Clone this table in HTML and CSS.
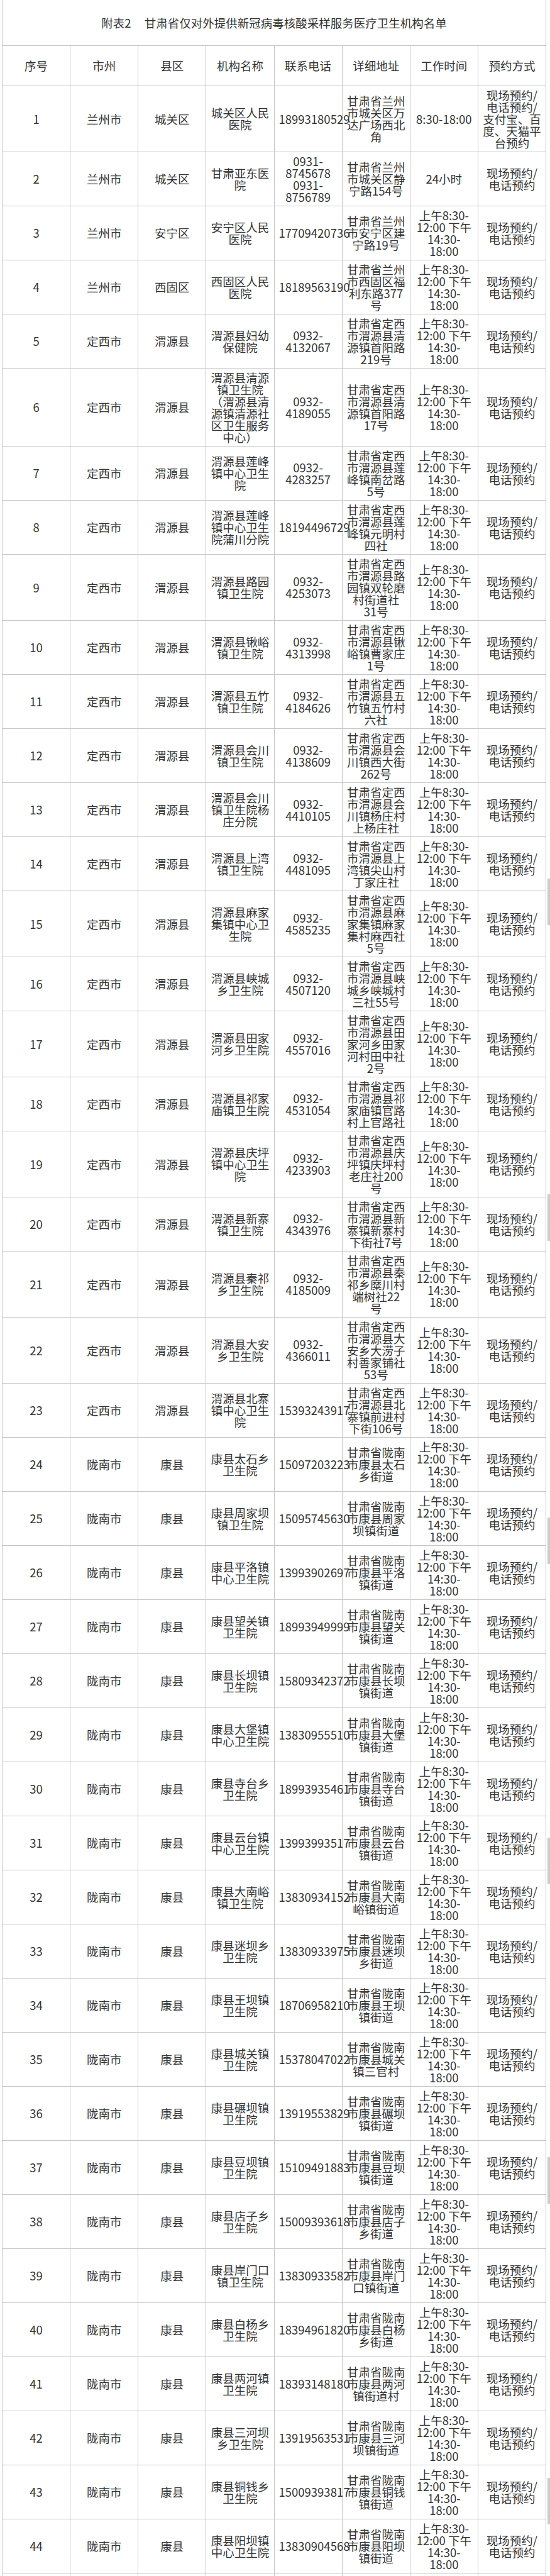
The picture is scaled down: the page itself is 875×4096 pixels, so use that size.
FILE: index.html
```html
<!DOCTYPE html>
<html lang="zh-CN">
<head>
<meta charset="utf-8">
<title>附表2 甘肃省仅对外提供新冠病毒核酸采样服务医疗卫生机构名单</title>
<link rel="stylesheet" href="styles.css">
</head>
<body>
<div class="page">
<table class="sheet">
<colgroup><col class="c"><col class="c"><col class="c"><col class="c"><col class="c"><col class="c"><col class="c"><col class="c"></colgroup>
<thead>
<tr><th colspan="8" class="title">附表2<span class="gap"></span>甘肃省仅对外提供新冠病毒核酸采样服务医疗卫生机构名单</th></tr>
<tr class="head"><th>序号</th><th>市州</th><th>县区</th><th>机构名称</th><th>联系电话</th><th>详细地址</th><th>工作时间</th><th>预约方式</th></tr>
</thead>
<tbody>
<tr><td>1</td><td>兰州市</td><td>城关区</td><td>城关区人民医院</td><td>18993180529</td><td>甘肃省兰州市城关区万达广场西北角</td><td>8:30-18:00</td><td>现场预约/<br>电话预约/<br>支付宝、百度、天猫平台预约</td></tr>
<tr><td>2</td><td>兰州市</td><td>城关区</td><td>甘肃亚东医院</td><td>0931-<br>8745678<br>0931-<br>8756789</td><td>甘肃省兰州市城关区静宁路154号</td><td>24小时</td><td>现场预约/<br>电话预约</td></tr>
<tr><td>3</td><td>兰州市</td><td>安宁区</td><td>安宁区人民医院</td><td>17709420736</td><td>甘肃省兰州市安宁区建宁路19号</td><td>上午8:30-<br>12:00 下午<br>14:30-<br>18:00</td><td>现场预约/<br>电话预约</td></tr>
<tr><td>4</td><td>兰州市</td><td>西固区</td><td>西固区人民医院</td><td>18189563190</td><td>甘肃省兰州市西固区福利东路377号</td><td>上午8:30-<br>12:00 下午<br>14:30-<br>18:00</td><td>现场预约/<br>电话预约</td></tr>
<tr><td>5</td><td>定西市</td><td>渭源县</td><td>渭源县妇幼保健院</td><td>0932-<br>4132067</td><td>甘肃省定西市渭源县清源镇首阳路219号</td><td>上午8:30-<br>12:00 下午<br>14:30-<br>18:00</td><td>现场预约/<br>电话预约</td></tr>
<tr><td>6</td><td>定西市</td><td>渭源县</td><td>渭源县清源镇卫生院（渭源县清源镇清源社区卫生服务中心）</td><td>0932-<br>4189055</td><td>甘肃省定西市渭源县清源镇首阳路17号</td><td>上午8:30-<br>12:00 下午<br>14:30-<br>18:00</td><td>现场预约/<br>电话预约</td></tr>
<tr><td>7</td><td>定西市</td><td>渭源县</td><td>渭源县莲峰镇中心卫生院</td><td>0932-<br>4283257</td><td>甘肃省定西市渭源县莲峰镇南岔路5号</td><td>上午8:30-<br>12:00 下午<br>14:30-<br>18:00</td><td>现场预约/<br>电话预约</td></tr>
<tr><td>8</td><td>定西市</td><td>渭源县</td><td>渭源县莲峰镇中心卫生院蒲川分院</td><td>18194496729</td><td>甘肃省定西市渭源县莲峰镇元明村四社</td><td>上午8:30-<br>12:00 下午<br>14:30-<br>18:00</td><td>现场预约/<br>电话预约</td></tr>
<tr><td>9</td><td>定西市</td><td>渭源县</td><td>渭源县路园镇卫生院</td><td>0932-<br>4253073</td><td>甘肃省定西市渭源县路园镇双轮磨村街道社31号</td><td>上午8:30-<br>12:00 下午<br>14:30-<br>18:00</td><td>现场预约/<br>电话预约</td></tr>
<tr><td>10</td><td>定西市</td><td>渭源县</td><td>渭源县锹峪镇卫生院</td><td>0932-<br>4313998</td><td>甘肃省定西市渭源县锹峪镇曹家庄1号</td><td>上午8:30-<br>12:00 下午<br>14:30-<br>18:00</td><td>现场预约/<br>电话预约</td></tr>
<tr><td>11</td><td>定西市</td><td>渭源县</td><td>渭源县五竹镇卫生院</td><td>0932-<br>4184626</td><td>甘肃省定西市渭源县五竹镇五竹村六社</td><td>上午8:30-<br>12:00 下午<br>14:30-<br>18:00</td><td>现场预约/<br>电话预约</td></tr>
<tr><td>12</td><td>定西市</td><td>渭源县</td><td>渭源县会川镇卫生院</td><td>0932-<br>4138609</td><td>甘肃省定西市渭源县会川镇西大街262号</td><td>上午8:30-<br>12:00 下午<br>14:30-<br>18:00</td><td>现场预约/<br>电话预约</td></tr>
<tr><td>13</td><td>定西市</td><td>渭源县</td><td>渭源县会川镇卫生院杨庄分院</td><td>0932-<br>4410105</td><td>甘肃省定西市渭源县会川镇杨庄村上杨庄社</td><td>上午8:30-<br>12:00 下午<br>14:30-<br>18:00</td><td>现场预约/<br>电话预约</td></tr>
<tr><td>14</td><td>定西市</td><td>渭源县</td><td>渭源县上湾镇卫生院</td><td>0932-<br>4481095</td><td>甘肃省定西市渭源县上湾镇尖山村丁家庄社</td><td>上午8:30-<br>12:00 下午<br>14:30-<br>18:00</td><td>现场预约/<br>电话预约</td></tr>
<tr><td>15</td><td>定西市</td><td>渭源县</td><td>渭源县麻家集镇中心卫生院</td><td>0932-<br>4585235</td><td>甘肃省定西市渭源县麻家集镇麻家集村麻西社5号</td><td>上午8:30-<br>12:00 下午<br>14:30-<br>18:00</td><td>现场预约/<br>电话预约</td></tr>
<tr><td>16</td><td>定西市</td><td>渭源县</td><td>渭源县峡城乡卫生院</td><td>0932-<br>4507120</td><td>甘肃省定西市渭源县峡城乡峡城村三社55号</td><td>上午8:30-<br>12:00 下午<br>14:30-<br>18:00</td><td>现场预约/<br>电话预约</td></tr>
<tr><td>17</td><td>定西市</td><td>渭源县</td><td>渭源县田家河乡卫生院</td><td>0932-<br>4557016</td><td>甘肃省定西市渭源县田家河乡田家河村田中社2号</td><td>上午8:30-<br>12:00 下午<br>14:30-<br>18:00</td><td>现场预约/<br>电话预约</td></tr>
<tr><td>18</td><td>定西市</td><td>渭源县</td><td>渭源县祁家庙镇卫生院</td><td>0932-<br>4531054</td><td>甘肃省定西市渭源县祁家庙镇官路村上官路社</td><td>上午8:30-<br>12:00 下午<br>14:30-<br>18:00</td><td>现场预约/<br>电话预约</td></tr>
<tr><td>19</td><td>定西市</td><td>渭源县</td><td>渭源县庆坪镇中心卫生院</td><td>0932-<br>4233903</td><td>甘肃省定西市渭源县庆坪镇庆坪村老庄社200号</td><td>上午8:30-<br>12:00 下午<br>14:30-<br>18:00</td><td>现场预约/<br>电话预约</td></tr>
<tr><td>20</td><td>定西市</td><td>渭源县</td><td>渭源县新寨镇卫生院</td><td>0932-<br>4343976</td><td>甘肃省定西市渭源县新寨镇新寨村下街社7号</td><td>上午8:30-<br>12:00 下午<br>14:30-<br>18:00</td><td>现场预约/<br>电话预约</td></tr>
<tr><td>21</td><td>定西市</td><td>渭源县</td><td>渭源县秦祁乡卫生院</td><td>0932-<br>4185009</td><td>甘肃省定西市渭源县秦祁乡糜川村端树社22号</td><td>上午8:30-<br>12:00 下午<br>14:30-<br>18:00</td><td>现场预约/<br>电话预约</td></tr>
<tr><td>22</td><td>定西市</td><td>渭源县</td><td>渭源县大安乡卫生院</td><td>0932-<br>4366011</td><td>甘肃省定西市渭源县大安乡大涝子村善家铺社53号</td><td>上午8:30-<br>12:00 下午<br>14:30-<br>18:00</td><td>现场预约/<br>电话预约</td></tr>
<tr><td>23</td><td>定西市</td><td>渭源县</td><td>渭源县北寨镇中心卫生院</td><td>15393243917</td><td>甘肃省定西市渭源县北寨镇前进村下街106号</td><td>上午8:30-<br>12:00 下午<br>14:30-<br>18:00</td><td>现场预约/<br>电话预约</td></tr>
<tr><td>24</td><td>陇南市</td><td>康县</td><td>康县太石乡卫生院</td><td>15097203223</td><td>甘肃省陇南市康县太石乡街道</td><td>上午8:30-<br>12:00 下午<br>14:30-<br>18:00</td><td>现场预约/<br>电话预约</td></tr>
<tr><td>25</td><td>陇南市</td><td>康县</td><td>康县周家坝镇卫生院</td><td>15095745630</td><td>甘肃省陇南市康县周家坝镇街道</td><td>上午8:30-<br>12:00 下午<br>14:30-<br>18:00</td><td>现场预约/<br>电话预约</td></tr>
<tr><td>26</td><td>陇南市</td><td>康县</td><td>康县平洛镇中心卫生院</td><td>13993902697</td><td>甘肃省陇南市康县平洛镇街道</td><td>上午8:30-<br>12:00 下午<br>14:30-<br>18:00</td><td>现场预约/<br>电话预约</td></tr>
<tr><td>27</td><td>陇南市</td><td>康县</td><td>康县望关镇卫生院</td><td>18993949999</td><td>甘肃省陇南市康县望关镇街道</td><td>上午8:30-<br>12:00 下午<br>14:30-<br>18:00</td><td>现场预约/<br>电话预约</td></tr>
<tr><td>28</td><td>陇南市</td><td>康县</td><td>康县长坝镇卫生院</td><td>15809342372</td><td>甘肃省陇南市康县长坝镇街道</td><td>上午8:30-<br>12:00 下午<br>14:30-<br>18:00</td><td>现场预约/<br>电话预约</td></tr>
<tr><td>29</td><td>陇南市</td><td>康县</td><td>康县大堡镇中心卫生院</td><td>13830955510</td><td>甘肃省陇南市康县大堡镇街道</td><td>上午8:30-<br>12:00 下午<br>14:30-<br>18:00</td><td>现场预约/<br>电话预约</td></tr>
<tr><td>30</td><td>陇南市</td><td>康县</td><td>康县寺台乡卫生院</td><td>18993935461</td><td>甘肃省陇南市康县寺台镇街道</td><td>上午8:30-<br>12:00 下午<br>14:30-<br>18:00</td><td>现场预约/<br>电话预约</td></tr>
<tr><td>31</td><td>陇南市</td><td>康县</td><td>康县云台镇中心卫生院</td><td>13993993517</td><td>甘肃省陇南市康县云台镇街道</td><td>上午8:30-<br>12:00 下午<br>14:30-<br>18:00</td><td>现场预约/<br>电话预约</td></tr>
<tr><td>32</td><td>陇南市</td><td>康县</td><td>康县大南峪镇卫生院</td><td>13830934152</td><td>甘肃省陇南市康县大南峪镇街道</td><td>上午8:30-<br>12:00 下午<br>14:30-<br>18:00</td><td>现场预约/<br>电话预约</td></tr>
<tr><td>33</td><td>陇南市</td><td>康县</td><td>康县迷坝乡卫生院</td><td>13830933975</td><td>甘肃省陇南市康县迷坝乡街道</td><td>上午8:30-<br>12:00 下午<br>14:30-<br>18:00</td><td>现场预约/<br>电话预约</td></tr>
<tr><td>34</td><td>陇南市</td><td>康县</td><td>康县王坝镇卫生院</td><td>18706958210</td><td>甘肃省陇南市康县王坝镇街道</td><td>上午8:30-<br>12:00 下午<br>14:30-<br>18:00</td><td>现场预约/<br>电话预约</td></tr>
<tr><td>35</td><td>陇南市</td><td>康县</td><td>康县城关镇卫生院</td><td>15378047022</td><td>甘肃省陇南市康县城关镇三官村</td><td>上午8:30-<br>12:00 下午<br>14:30-<br>18:00</td><td>现场预约/<br>电话预约</td></tr>
<tr><td>36</td><td>陇南市</td><td>康县</td><td>康县碾坝镇卫生院</td><td>13919553829</td><td>甘肃省陇南市康县碾坝镇街道</td><td>上午8:30-<br>12:00 下午<br>14:30-<br>18:00</td><td>现场预约/<br>电话预约</td></tr>
<tr><td>37</td><td>陇南市</td><td>康县</td><td>康县豆坝镇卫生院</td><td>15109491883</td><td>甘肃省陇南市康县豆坝镇街道</td><td>上午8:30-<br>12:00 下午<br>14:30-<br>18:00</td><td>现场预约/<br>电话预约</td></tr>
<tr><td>38</td><td>陇南市</td><td>康县</td><td>康县店子乡卫生院</td><td>15009393618</td><td>甘肃省陇南市康县店子乡街道</td><td>上午8:30-<br>12:00 下午<br>14:30-<br>18:00</td><td>现场预约/<br>电话预约</td></tr>
<tr><td>39</td><td>陇南市</td><td>康县</td><td>康县岸门口镇卫生院</td><td>13830933582</td><td>甘肃省陇南市康县岸门口镇街道</td><td>上午8:30-<br>12:00 下午<br>14:30-<br>18:00</td><td>现场预约/<br>电话预约</td></tr>
<tr><td>40</td><td>陇南市</td><td>康县</td><td>康县白杨乡卫生院</td><td>18394961820</td><td>甘肃省陇南市康县白杨乡街道</td><td>上午8:30-<br>12:00 下午<br>14:30-<br>18:00</td><td>现场预约/<br>电话预约</td></tr>
<tr><td>41</td><td>陇南市</td><td>康县</td><td>康县两河镇卫生院</td><td>18393148180</td><td>甘肃省陇南市康县两河镇街道村</td><td>上午8:30-<br>12:00 下午<br>14:30-<br>18:00</td><td>现场预约/<br>电话预约</td></tr>
<tr><td>42</td><td>陇南市</td><td>康县</td><td>康县三河坝乡卫生院</td><td>13919563531</td><td>甘肃省陇南市康县三河坝镇街道</td><td>上午8:30-<br>12:00 下午<br>14:30-<br>18:00</td><td>现场预约/<br>电话预约</td></tr>
<tr><td>43</td><td>陇南市</td><td>康县</td><td>康县铜钱乡卫生院</td><td>15009393817</td><td>甘肃省陇南市康县铜钱镇街道</td><td>上午8:30-<br>12:00 下午<br>14:30-<br>18:00</td><td>现场预约/<br>电话预约</td></tr>
<tr><td>44</td><td>陇南市</td><td>康县</td><td>康县阳坝镇中心卫生院</td><td>13830904568</td><td>甘肃省陇南市康县阳坝镇街道</td><td>上午8:30-<br>12:00 下午<br>14:30-<br>18:00</td><td>现场预约/<br>电话预约</td></tr>
<tr class="tail"><td></td><td></td><td></td><td></td><td></td><td></td><td></td><td></td></tr>
</tbody>
</table>
<div class="mark m1"></div>
<div class="mark m2"></div>
<div class="mark m3"></div>
<div class="mark m4"></div>
<div class="mark m5"></div>
<div class="mark m6"></div>
</div>
</body>
</html>
```
FILE: styles.css
```css
html, body {
  margin: 0;
  padding: 0;
  background: #ffffff;
}

body {
  font-family: "Noto Sans CJK SC", "Noto Sans", "DejaVu Sans", sans-serif;
  color: #333333;
}

.page {
  position: relative;
  width: 875px;
  padding-left: 3px;
  box-sizing: border-box;
}

.sheet {
  border-collapse: collapse;
  table-layout: fixed;
  width: 866px;
  font-size: 18.5px;
  line-height: 19px;
}

.sheet .c {
  width: 12.5%;
}

.sheet th,
.sheet td {
  border: 1px solid #c6c6c6;
  padding: 4.5px 7px;
  text-align: center;
  vertical-align: middle;
  font-weight: 400;
}

.sheet .title {
  border-top: none;
  padding: 26.5px 7px;
}

.sheet .gap {
  display: inline-block;
  width: 21px;
}

.sheet .head th {
  padding: 22px 7px;
}

.sheet .tail {
  height: 86px;
}

.mark {
  position: absolute;
  right: 0;
  width: 4px;
  height: 74px;
  background: #cccccc;
}

.m1 { top: 1397px; }
.m2 { top: 1899px; }
.m3 { top: 2413px; }
.m4 { top: 2922px; }
.m5 { top: 3430px; }
.m6 { top: 3940px; }
```
